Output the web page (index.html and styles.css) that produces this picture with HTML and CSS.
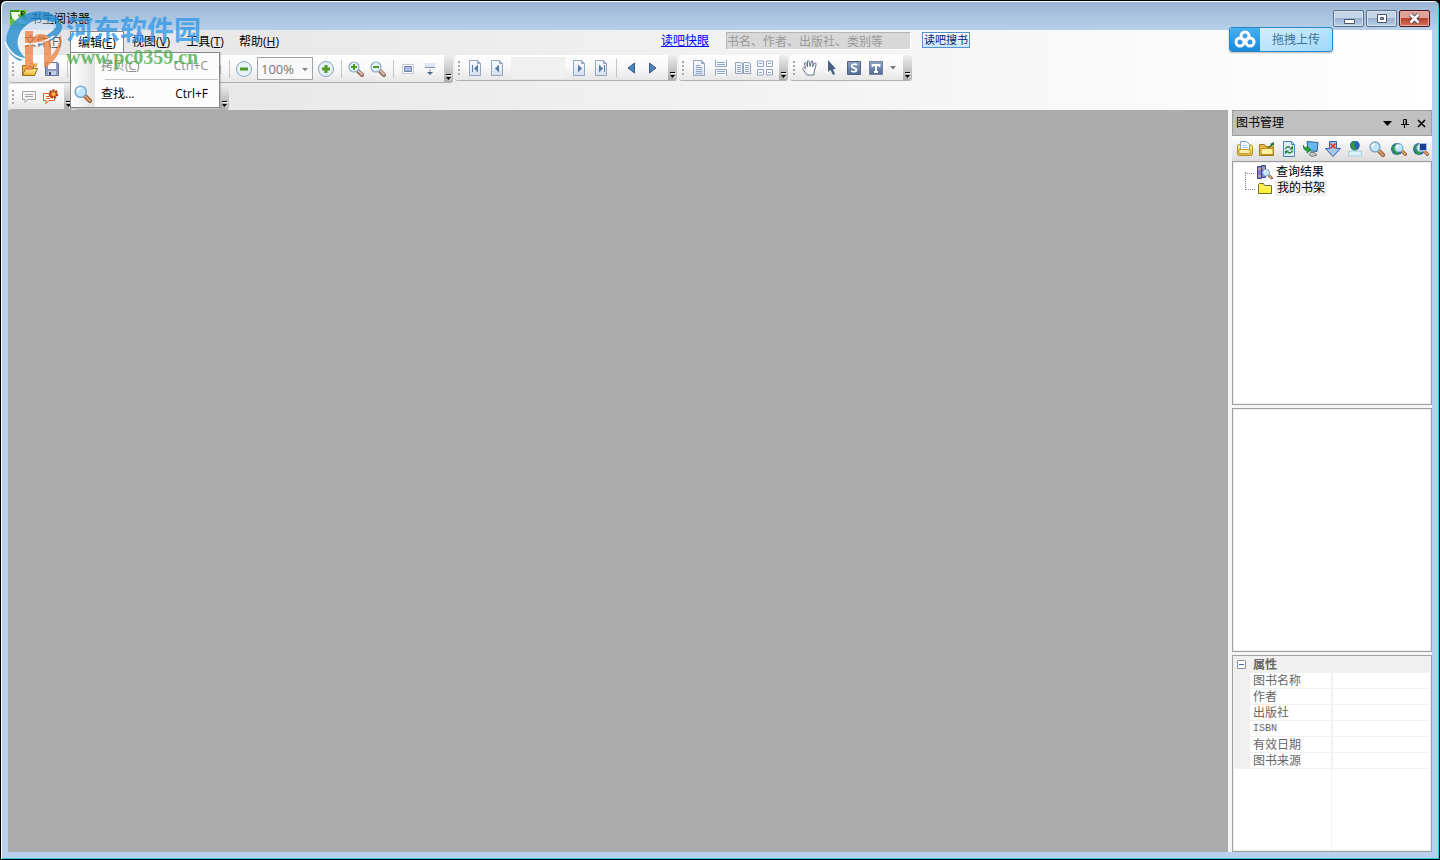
FILE: index.html
```html
<!DOCTYPE html>
<html lang="zh-CN">
<head>
    <meta charset="utf-8">
    <meta name="viewport" content="width=device-width">
    <title>书生阅读器</title>
    <link rel="stylesheet" href="styles.css">
</head>
<body>
<!-- shared icons -->
<svg class="defs" width="0" height="0">
    <defs>
        <linearGradient id="g-page" x1="0" y1="0" x2="0" y2="1"><stop offset="0" stop-color="#fff"/><stop offset="1" stop-color="#d5deee"/></linearGradient>
        <linearGradient id="g-blue" x1="0" y1="0" x2="0" y2="1"><stop offset="0" stop-color="#8fa3c4"/><stop offset="1" stop-color="#536b93"/></linearGradient>
        <linearGradient id="g-gold" x1="0" y1="0" x2="0" y2="1"><stop offset="0" stop-color="#fff0a0"/><stop offset="1" stop-color="#e5b42d"/></linearGradient>
    </defs>
    <symbol id="i-lens" viewBox="0 0 16 16">
        <path d="M9 9l5 5" stroke="#8c6258" stroke-width="4" stroke-linecap="round"/>
        <path d="M10 9.500l4 4" stroke="#dcb9ac" stroke-width="2" stroke-linecap="round"/>
        <circle cx="6" cy="6" r="5" fill="#e3f3fb" stroke="#90a9c4" stroke-width="1.200"/>
    </symbol>
    <symbol id="i-find" viewBox="0 0 16 16">
        <path d="M10 10l4 4" stroke="#8b5a3c" stroke-width="4" stroke-linecap="round"/>
        <path d="M10 10l4 4" stroke="#e89a5e" stroke-width="2" stroke-linecap="round"/>
        <circle cx="6" cy="6" r="5" fill="#bfe6fa" stroke="#7ea4c8" stroke-width="1.300"/>
        <path d="M3 6q0-3 3-3" stroke="#fff" stroke-width="1.500" fill="none"/>
    </symbol>
    <symbol id="i-sheet" viewBox="0 0 16 16">
        <path d="M2.500.500h8l3 3v12h-11z" fill="url(#g-page)" stroke="#91a4c0"/>
        <path d="M10.500.500v3h3z" fill="#b3c2da" stroke="#91a4c0"/>
    </symbol>
    <symbol id="i-globe" viewBox="0 0 16 16">
        <circle cx="6" cy="8" r="6" fill="#2464b8"/>
        <path d="M1 6q4-4 6-3l-2 5 3 4-2 2q-5-2-5-8z" fill="#2f9a3c"/>
    </symbol>
    <symbol id="i-more" viewBox="0 0 7 8">
        <path d="M1 0h5v1H1zM1 3h5L3.500 6z"/>
        <path d="M2 1h5v1H2zM6 4h1L4.500 7H4z" fill="#fff"/>
    </symbol>
</svg>

<div class="window">
    <header class="titlebar">
        <svg class="app-icon" width="16" height="16" viewBox="0 0 16 16">
            <path d="M0 0h16v16H0z" fill="#69bf2c"/><path d="M0 0h9v9H0z" fill="#3c9a1d"/>
            <path d="M1 2h9v2Q5 5 12 9l4 2v3H9L2 8z" fill="#f2fbe5"/><path d="M1 15l7-4 3 4z" fill="#c8ec56"/>
            <path d="M11.500 6V1.500h2q2 1 0 2.500h-2l3 2" fill="none" stroke="#152b10"/>
        </svg>
        <span class="caption">书生阅读器</span>
        <div class="window-buttons">
            <button aria-label="最小化"><svg width="12" height="12"><path d="M1.500 6.500h10v4h-10z" fill="#fff" stroke="#4b5366"/></svg></button>
            <button aria-label="还原"><svg width="12" height="10"><path d="M1.500.500h9v8h-9z" fill="#fff" stroke="#4b5366"/><path d="M4.500 3.500h3v2h-3z" fill="#8ba4c3" stroke="#4b5366"/></svg></button>
            <button class="close" aria-label="关闭"><svg width="13" height="11"><path d="M2.500 1.500l8 8m0-8l-8 8" stroke="#564350" stroke-width="4.500"/><path d="M2.500 1.500l8 8m0-8l-8 8" stroke="#fff" stroke-width="2.600"/></svg></button>
        </div>
    </header>

    <div class="client">
        <div class="menu-row">
            <nav class="menubar">
                <button>文件(<u>F</u>)</button>
                <div class="menu-open">
                    <button>编辑(<u>E</u>)</button>
                    <div class="menu">
                        <button class="disabled" disabled><span class="gutter"></span><span class="label">拷贝(<u>C</u>)</span><span>Ctrl+C</span></button>
                        <div class="menu-line"></div>
                        <button><span class="gutter"><svg width="18" height="18"><use href="#i-find"/></svg></span><span class="label">查找...</span><span>Ctrl+F</span></button>
                    </div>
                </div>
                <button>视图(<u>V</u>)</button>
                <button>工具(<u>T</u>)</button>
                <button>帮助(<u>H</u>)</button>
            </nav>
            <form class="search">
                <a href="#">读吧快眼</a>
                <input type="text" aria-label="搜书" placeholder="书名、作者、出版社、类别等">
                <button type="button">读吧搜书</button>
            </form>
        </div>

        <div class="toolbars">
            <div class="toolbar file-bar">
                <i class="grip"></i>
                <button aria-label="打开"><svg width="18" height="16"><path d="M1.500 14V4.500h4l1 1h6v3" fill="#e8b83e" stroke="#9a6d17"/><path d="M1.500 14.500l3-7h12l-3 7z" fill="url(#g-gold)" stroke="#9a6d17"/><path d="M9 3q3-3 5 0l2-1-1 4-4-1 1.500-1Q11 2.500 9 3z" fill="#f4ac43" stroke="#b27420" stroke-width=".500"/></svg></button>
                <button aria-label="保存"><svg width="16" height="16"><path d="M1.500 1.500h12l1 1v12h-13z" fill="#8c9ac3" stroke="#62719b"/><path d="M4 2h8v6H4z" fill="#f5f7fc"/><path d="M4 10h8v4H4z" fill="#c4cbdd"/><path d="M5 11h2v3H5z" fill="#36456d"/></svg></button>
                <i class="sep"></i>
                <button aria-label="打印"><svg width="16" height="16"><use href="#i-sheet"/></svg></button>
                <button aria-label="拷贝"><svg width="16" height="16"><use href="#i-sheet"/></svg></button>
                <button aria-label="撤销"><svg width="16" height="16"><use href="#i-sheet"/></svg></button>
                <button aria-label="重做"><svg width="16" height="16"><use href="#i-sheet"/></svg></button>
                <button aria-label="左旋"><svg width="16" height="16"><use href="#i-sheet"/></svg></button>
                <button aria-label="右旋"><svg width="16" height="16"><use href="#i-sheet"/></svg></button>
                <button aria-label="全屏"><svg width="16" height="16"><path d="M1 4h14v9H1z" fill="#a3a9bb"/></svg></button>
                <i class="sep"></i>
                <button aria-label="缩小"><svg width="16" height="16"><circle cx="8" cy="8" r="7.500" fill="#e6f1f8" stroke="#8ba4bd"/><path d="M4 6.500h8v3H4z" fill="#4f9a23"/></svg></button>
                <label class="zoom"><select aria-label="缩放"><option>100%</option></select></label>
                <button aria-label="放大"><svg width="16" height="16"><circle cx="8" cy="8" r="7.500" fill="#e6f1f8" stroke="#8ba4bd"/><path d="M6.500 4h3v2.500H12v3H9.500V12h-3V9.500H4v-3h2.500z" fill="#4f9a23"/></svg></button>
                <i class="sep"></i>
                <button aria-label="放大镜"><svg width="16" height="16"><use href="#i-lens"/><path d="M6 3v6M3 6h6" stroke="#4f9a23" stroke-width="2"/></svg></button>
                <button aria-label="缩小镜"><svg width="16" height="16"><use href="#i-lens"/><path d="M3 6h6" stroke="#4f9a23" stroke-width="2"/></svg></button>
                <i class="sep"></i>
                <button aria-label="适合页面"><svg width="14" height="12"><path d="M1.500 1.500h11v9h-11z" fill="#fff" stroke="#8796b3" stroke-dasharray="1 1"/><path d="M3.500 3.500h7v5h-7z" fill="#a9bce0" stroke="#6b80ab"/></svg></button>
                <button aria-label="适合宽度"><svg width="12" height="14"><path d="M1 1h10v4H1z" fill="#dfe5f1"/><path d="M1 5.500h10M6 7v5" stroke="#8595b1"/><path d="M3 10h6l-3 3z" fill="#4d6a93"/></svg></button>
                <button class="more" aria-label="更多"><svg width="7" height="8"><use href="#i-more"/></svg></button>
            </div>
            <div class="toolbar page-bar">
                <i class="grip"></i>
                <button aria-label="首页"><svg width="16" height="16"><use href="#i-sheet"/><path d="M5.500 5v7" stroke="#5b7ba8"/><path d="M11 4.500v8l-4-4z" fill="#5b7ba8"/></svg></button>
                <button aria-label="上一页"><svg width="16" height="16"><use href="#i-sheet"/><path d="M10 4.500v8l-4-4z" fill="#5b7ba8"/></svg></button>
                <input class="page-no" type="text" aria-label="页码">
                <button aria-label="下一页"><svg width="16" height="16"><use href="#i-sheet"/><path d="M7 4.500v8l4-4z" fill="#5b7ba8"/></svg></button>
                <button aria-label="末页"><svg width="16" height="16"><use href="#i-sheet"/><path d="M11.500 5v7" stroke="#5b7ba8"/><path d="M6 4.500v8l4-4z" fill="#5b7ba8"/></svg></button>
                <i class="sep"></i>
                <button aria-label="后退"><svg width="8" height="12"><path d="M7.500 1v10L1 6z" fill="#4c86b8" stroke="#38598f"/></svg></button>
                <button aria-label="前进"><svg width="8" height="12"><path d="M.500 1v10L7 6z" fill="#4c86b8" stroke="#38598f"/></svg></button>
                <button class="more" aria-label="更多"><svg width="7" height="8"><use href="#i-more"/></svg></button>
            </div>
            <div class="toolbar view-bar">
                <i class="grip"></i>
                <button aria-label="单页"><svg width="16" height="16"><use href="#i-sheet"/><path d="M5 5.500h4M5 7.500h6M5 9.500h6M5 11.500h6M5 13.500h6" stroke="#91a4c0"/></svg></button>
                <button aria-label="连续"><svg width="16" height="16" fill="#f7f9fc" stroke="#91a4c0"><path d="M2.500 0v6.500h11V0M2.500 16V9.500h11V16M4 2.500h8M4 4.500h8M4 11.500h8M4 13.500h8"/></svg></button>
                <button aria-label="对开"><svg width="16" height="16" fill="#f0f4fa" stroke="#91a4c0"><path d="M.500 2.500h5l2 1v10h-7zM8.500 2.500h5l2 1v10h-7zM2 5.500h4M2 7.500h4M2 9.500h4M2 11.500h4M10 5.500h4M10 7.500h4M10 9.500h4M10 11.500h4"/></svg></button>
                <button aria-label="连续对开"><svg width="16" height="16" fill="#f7f9fc" stroke="#91a4c0"><path d="M.500 1v5.500h6V1zM9.500 1v5.500h6V1zM.500 15V9.500h6V15zM9.500 15V9.500h6V15zM2 3.500h3M11 3.500h3M2 12.500h3M11 12.500h3"/></svg></button>
                <button class="more" aria-label="更多"><svg width="7" height="8"><use href="#i-more"/></svg></button>
            </div>
            <div class="toolbar tool-bar">
                <i class="grip"></i>
                <button aria-label="手形"><svg width="18" height="18"><path d="M6 16L1.500 9.500Q2 7.500 4.500 9.500L3.500 4Q5 2 6.500 8L6.500 2Q8-.500 9 7.500L10.500 2Q12.500 1 11.500 8l2-4q2.500-.500 1 4L13 13v3z" fill="#fff" stroke="#62738e"/></svg></button>
                <button aria-label="选择"><svg width="10" height="16"><path d="M1 0l8 9H6l2 5-2 1-2.500-5L1 12z" fill="#4b6183"/></svg></button>
                <button aria-label="选择文字"><svg width="14" height="14"><path d="M.500.500h13v13H.500z" fill="url(#g-blue)" stroke="#506486"/><path d="M10 4Q8 2.500 6 3.500T5 6l4 2q1 2-1 2.500T4 10" fill="none" stroke="#fff" stroke-width="1.800"/></svg></button>
                <button aria-label="文本"><svg width="14" height="14"><path d="M.500.500h13v13H.500z" fill="url(#g-blue)" stroke="#7283a0"/><path d="M3.500 6V4h7v2M7 4v7M5 11h4" fill="none" stroke="#fff" stroke-width="1.800"/></svg></button>
                <button class="caret" aria-label="文本选项"><svg width="6" height="4"><path d="M0 0h6L3 3.500z" fill="#777"/></svg></button>
                <button class="more" aria-label="更多"><svg width="7" height="8"><use href="#i-more"/></svg></button>
            </div>
        </div>
        <div class="toolbars">
            <div class="toolbar note-bar">
                <i class="grip"></i>
                <button aria-label="批注"><svg width="16" height="14"><path d="M1.500 1.500h13v8H7l-3 3v-3H1.500zM4 4.500h8M4 6.500h8" fill="none" stroke="#a4a4a4"/></svg></button>
                <button aria-label="批注设置"><svg width="18" height="16"><path d="M1.500 4.500h11v7H7l-3 3v-3H1.500zM4 7.500h6M4 9.500h4" fill="#fff" stroke="#e55a1c"/><circle cx="11.500" cy="5" r="3.500" fill="#f47b20" stroke="#a63c11" stroke-width="2.500" stroke-dasharray="2 1"/><circle cx="11.500" cy="5" r="1.500" fill="#ffc567"/></svg></button>
                <button class="more" aria-label="更多"><svg width="7" height="8"><use href="#i-more"/></svg></button>
            </div>
            <div class="toolbar mark-bar">
                <i class="grip"></i>
                <button class="more" aria-label="更多"><svg width="7" height="8"><use href="#i-more"/></svg></button>
            </div>
        </div>

        <div class="workspace">
            <main class="document"></main>
            <aside class="side">
                <section class="books">
                    <div class="side-head">
                        <h2>图书管理</h2>
                        <button aria-label="菜单"><svg width="9" height="5"><path d="M0 0h9L4.500 5z"/></svg></button>
                        <button aria-label="固定"><svg width="8" height="9"><path d="M2.500 5.500v-5h3v5M5 1v4M0 5.500h8M3.500 5v4" fill="none" stroke="#000"/></svg></button>
                        <button aria-label="关闭面板"><svg width="9" height="9"><path d="M1 1l7 7M8 1L1 8" stroke="#000" stroke-width="1.600"/></svg></button>
                    </div>
                    <div class="side-tools">
                        <button aria-label="新建"><svg width="18" height="16"><path d="M1.500 5q0-1.500 2-1.500h10q3 0 3 3v6q0 2-2 2h-11q-2 0-2-2z" fill="url(#g-gold)" stroke="#b08e26"/><path d="M4.500 9.500v-9h6l3 3v6z" fill="#fff" stroke="#7ba0cc"/><path d="M6 4.500h5M6 6.500h6" stroke="#a9c5e6"/><path d="M3 8.500h11v4H3z" fill="#f8eda8" stroke="#c09c32"/></svg></button>
                        <button aria-label="打开目录"><svg width="18" height="16"><path d="M1.500 3.500h5l1 2h8v9h-14z" fill="#e9b941" stroke="#a57c19"/><path d="M3 7.500h12v6H3z" fill="#fff1a1" stroke="#b98c20"/><path d="M9 7l4-3-1-1 4-2v4l-1-1-4 3z" fill="#276f38"/></svg></button>
                        <button aria-label="刷新"><svg width="16" height="16"><path d="M2.500.500h8l3 3v12h-11z" fill="#deedfb" stroke="#4d7fb8"/><path d="M10.500.500v3h3" fill="none" stroke="#4d7fb8"/><path d="M4.500 8Q6 4.500 9 6.500M11.500 9.500Q10 13 6.500 11" fill="none" stroke="#198335" stroke-width="1.500"/><path d="M8 8.500h4v-4zM8 9.500H4v4z" fill="#198335"/></svg></button>
                        <button aria-label="导入"><svg width="16" height="16"><path d="M4 .500l11 1-1 9-9-1z" fill="#65b7ef" stroke="#375d88"/><path d="M8 11l4 1 2 2-5 1.500-3-2z" fill="#c8ccd0" stroke="#777"/><path d="M0 4q1 3 4 3V5l4 4-4 3v-2Q0 9 0 4z" fill="#22a842" stroke="#126327" stroke-width=".600"/></svg></button>
                        <button aria-label="移除"><svg width="16" height="16"><path d="M4.500.500h7v7h4L8 15.500.500 7.500h4z" fill="#a4c8f2" stroke="#315eaa"/><path d="M5.500 2.500l5 5m0-5l-5 5" stroke="#e13620" stroke-width="1.700"/></svg></button>
                        <button aria-label="网络"><svg width="14" height="16"><path d="M1 10h12l1 5H0z" fill="#dbf1fc" stroke="#a1cce2"/><use href="#i-globe" x="2" y="-2" width="13" height="13"/></svg></button>
                        <button aria-label="搜索"><svg width="16" height="16"><use href="#i-find"/></svg></button>
                        <button aria-label="网络搜索"><svg width="16" height="16"><use href="#i-globe"/><use href="#i-find" x="3" y="1" width="13" height="15"/></svg></button>
                        <button aria-label="高级搜索"><svg width="16" height="16"><use href="#i-globe"/><use href="#i-find" x="3" y="1" width="13" height="15"/><path d="M6.500 2.500h7v7h-7z" fill="#163f91" stroke="#a8c4e8"/></svg></button>
                    </div>
                    <ul class="tree">
                        <li><svg width="18" height="16"><path d="M2.500 2.500h4v12h-4z" fill="#8877d2" stroke="#4c3f8c"/><path d="M6.500 1.500h4v12h-4z" fill="#6f7fc8" stroke="#3e4c87"/><path d="M3 5h3M7 4h3M3 12h3" stroke="#f0cb51"/><use href="#i-find" x="7" y="4" width="11" height="12"/></svg><a href="#">查询结果</a></li>
                        <li><svg width="18" height="16"><path d="M2.500 13.500v-9l1-1h4l1 2h7v8z" fill="#ffee3d" stroke="#70701f"/><path d="M4 7h11" stroke="#fff" stroke-dasharray="1 1"/></svg><a class="selected" href="#">我的书架</a></li>
                    </ul>
                </section>
                <section class="detail"></section>
                <section class="props">
                    <table>
                        <colgroup><col class="col-fold"><col class="col-name"><col></colgroup>
                        <thead><tr><th class="fold"><button aria-label="折叠"></button></th><th colspan="2">属性</th></tr></thead>
                        <tbody>
                            <tr><td></td><td>图书名称</td><td></td></tr>
                            <tr><td></td><td>作者</td><td></td></tr>
                            <tr><td></td><td>出版社</td><td></td></tr>
                            <tr><td></td><td class="latin">ISBN</td><td></td></tr>
                            <tr><td></td><td>有效日期</td><td></td></tr>
                            <tr><td></td><td>图书来源</td><td></td></tr>
                        </tbody>
                    </table>
                </section>
            </aside>
        </div>
    </div>
</div>

<button class="upload">
    <svg width="30" height="24"><g fill="none" stroke="#fff" stroke-width="3"><circle cx="15" cy="8" r="4"/><circle cx="10" cy="14" r="4"/><circle cx="20" cy="14" r="4"/></g></svg>
    <span>拖拽上传</span>
</button>

<div class="watermark">
    <svg width="60" height="62" viewBox="0 0 60 62">
        <circle cx="30" cy="31" r="24" fill="#fff" opacity=".5"/>
        <!-- blue crescent and its tail -->
        <path d="M16 52C-4 44-2 14 22 5 38-1 50 4 56 12l-8 1C38 8 24 11 17 22 11 32 13 42 22 49z" fill="#268ed1"/>
        <path d="M52 12q10 2 4 12-7 9-21 13l-2-6q13-5 19-13z" fill="#268ed1"/>
        <!-- orange arch -->
        <path d="M57 24q3 24-17 35V39q0-5-5-5-4 0-6 3v24h-8V22h8v7q3-4 8-4 10 0 10 12v10q8-8 10-23z" fill="#ee8848"/>
        <path d="M1 33q6 15 20 17M50 27Q38 36 20 35" fill="none" stroke="#fff" stroke-width="2"/>
    </svg>
    <div class="watermark-text"><strong>河东软件园</strong><b>www.pc0359.cn</b></div>
</div>
</body>
</html>
```
FILE: styles.css
```css
:root {
    --line: #a0a0a0;
    --face: #f0f0f0;
    --frame: #b9d1ea;
    --sans: "Open Sans", "Noto Sans CJK SC", sans-serif;
}

* {
    box-sizing: border-box;
}

body {
    margin: 0;
    font: 12px/16px var(--sans);
    color: #000;
    background: #000;
    overflow: hidden;
}

button, input, select {
    margin: 0;
    padding: 0;
    border: 0;
    font: inherit;
    color: inherit;
    background: none;
}

.defs {
    position: absolute;
}

svg {
    display: block;
    flex: none;
}

.window {
    display: flex;
    flex-direction: column;
    height: 100vh;
    padding: 0 7px 7px;
    border: 1px solid #000;
    border-radius: 6px 6px 0 0;
    background: linear-gradient(#99b4d1, var(--frame) 30px);
    box-shadow: inset 1px 1px #fff, inset -1px -1px #27cbe8;
}

/* title bar */
.titlebar {
    display: flex;
    flex: none;
    height: 29px;
    padding: 9px 2px 0;
    gap: 4px;
}

.caption {
    line-height: 18px;
}

.window-buttons {
    display: flex;
    gap: 2px;
    margin-left: auto;
}

.window-buttons button {
    display: flex;
    align-items: center;
    justify-content: center;
    width: 31px;
    height: 17px;
    border: 1px solid #5c6f8c;
    border-radius: 2px;
    background: linear-gradient(#c4d5e8 50%, #98b2d0 50%, #b9cfe6);
    box-shadow: inset 0 0 0 1px #d6e4f2;
}

.window-buttons .close {
    border-color: #4b1824;
    background: linear-gradient(#dfa197 50%, #bb4030 50%, #d3705b);
    box-shadow: inset 0 0 0 1px #e5aaa0;
}

.client {
    display: flex;
    flex: 1;
    flex-direction: column;
    min-height: 0;
    background: linear-gradient(90deg, #e4e4e4, #fff);
}

/* menu bar */
.menu-row {
    display: flex;
    flex: none;
    height: 25px;
}

.menubar {
    display: flex;
    width: 653px;
    padding: 1px 0 0 8px;
}

.menubar > button, .menu-open > button {
    width: 54px;
    height: 22px;
    text-align: center;
    white-space: nowrap;
}

.menu-open {
    position: relative;
    z-index: 5;
}

.menu-open > button {
    background: #fff;
    border: 1px solid #868686;
    border-bottom: 0;
}

.menu {
    position: absolute;
    top: 21px;
    left: 0;
    width: 150px;
    border: 1px solid #868686;
    background: #fcfcfc linear-gradient(90deg, #fff, #e2e2e2) no-repeat 0 0 / 24px 100%;
    box-shadow: 1px 1px 1px #9996;
}

.menu button {
    display: flex;
    align-items: center;
    width: 100%;
    height: 26px;
    padding-right: 11px;
}

.menu .disabled {
    color: #8d8d8d;
}

.gutter {
    width: 30px;
    padding-left: 3px;
}

.menu .label {
    margin-right: auto;
}

.menu-line {
    height: 1px;
    margin: 0 1px 1px 34px;
    background: #c5c5c5;
}

.search {
    display: flex;
    align-items: flex-start;
    padding-top: 2px;
}

.search a {
    color: #00f;
    line-height: 18px;
    margin-right: 17px;
}

.search input {
    width: 185px;
    height: 18px;
    margin-right: 11px;
    border: 1px solid #fff;
    border-top-color: #b5b5b5;
    border-left-color: #b5b5b5;
    background: #d8d8d8;
}

.search input::placeholder {
    color: #999;
    opacity: 1;
}

.search button {
    width: 48px;
    height: 16px;
    border: 1px solid #5794cb;
    background: linear-gradient(#fff, #c6e8fa);
    color: #002070;
    font-size: 11px;
    line-height: 14px;
    white-space: nowrap;
}

/* toolbars */
.toolbars {
    display: flex;
    flex: none;
    align-items: flex-start;
    gap: 2px;
    height: 29px;
    padding-left: 1px;
}

.toolbars + .toolbars {
    height: 26px;
}

.toolbar {
    display: flex;
    flex: none;
    align-items: center;
    height: 26px;
    border-bottom: 1px solid #b0b0b0;
    border-radius: 3px;
    background: linear-gradient(#fff, #f8f8f8 50%, #e6e6e6);
}

.file-bar {
    width: 444px;
    height: 28px;
}

.page-bar {
    width: 222px;
}

.view-bar {
    width: 109px;
}

.tool-bar {
    width: 122px;
}

.note-bar {
    width: 64px;
}

.mark-bar {
    width: 154px;
}

.toolbar button {
    display: flex;
    flex: none;
    align-items: center;
    justify-content: center;
    width: 22px;
    height: 24px;
}

.grip {
    flex: none;
    width: 9px;
    height: 14px;
    background: repeating-linear-gradient(#aaa 0 2px, transparent 2px 4px) no-repeat 3px 0 / 2px 100%;
}

.file-bar .grip {
    width: 10px;
}

.sep {
    flex: none;
    width: 8px;
    height: 18px;
    background: linear-gradient(#c4c4c4, #c4c4c4) no-repeat center / 1px 100%;
}

.toolbar .more {
    align-items: flex-end;
    align-self: stretch;
    width: 9px;
    height: auto;
    margin-left: auto;
    border-radius: 0 3px 3px 0;
    background: linear-gradient(#eee, #aaa);
}

.toolbar .caret {
    width: 12px;
}

.zoom {
    position: relative;
    flex: none;
    margin: 0 2px;
}

.zoom::after {
    content: "";
    position: absolute;
    top: 11px;
    right: 5px;
    border: 3px solid transparent;
    border-top-color: #808080;
}

.zoom select {
    display: block;
    width: 56px;
    height: 23px;
    padding-left: 3px;
    border: 1px solid #a3a3a3;
    background: #f8f8f8;
    color: #777;
    font-size: 13px;
    appearance: none;
}

.page-no {
    width: 54px;
    height: 22px;
    margin: 0 3px;
    background: var(--face);
}

/* document and side panel */
.workspace {
    display: flex;
    flex: 1;
    min-height: 0;
}

.document {
    flex: 1;
    background: #ababab;
}

.side {
    display: flex;
    flex: none;
    flex-direction: column;
    gap: 3px;
    width: 204px;
    padding-left: 4px;
    background: #f5f5f5;
}

.books {
    display: flex;
    flex: 295 1 295px;
    flex-direction: column;
}

.side-head {
    display: flex;
    align-items: center;
    height: 26px;
    padding: 0 1px 0 3px;
    border: 1px solid var(--line);
    background: #c0c0c0;
}

.side-head h2 {
    margin: 0 auto 0 0;
    font: inherit;
}

.side-head button {
    display: flex;
    align-items: center;
    justify-content: center;
    width: 17px;
    height: 16px;
}

.side-tools {
    display: flex;
    height: 25px;
    padding: 0 0 0 2px;
    background: linear-gradient(#fff, #dcdcdc);
}

.side-tools button {
    display: flex;
    align-items: center;
    justify-content: center;
    width: 22px;
}

.tree, .detail, .props {
    margin: 0;
    border: 1px solid var(--line);
    background: #fff;
    box-shadow: inset 0 0 0 1px #eee;
}

.tree {
    flex: 1;
    padding: 2px 0 0 12px;
    list-style: none;
}

.tree li {
    display: flex;
    height: 16px;
    gap: 1px;
}

.tree li::before {
    content: "";
    width: 9px;
    height: 9px;
    border-bottom: 1px dotted #888;
}

.tree li + li::before {
    height: 17px;
    margin-top: -8px;
    border-left: 1px dotted #888;
}

.tree a {
    padding: 0 2px;
    color: inherit;
    text-decoration: none;
}

.tree .selected {
    background: var(--face);
}

.detail {
    flex: 244 1 244px;
}

.props {
    flex: 197 1 197px;
    padding: 1px;
    background: linear-gradient(var(--face), var(--face)) no-repeat 98px 0 / 1px 100%, #fff;
}

.props table {
    width: 100%;
    border-collapse: separate;
    border-spacing: 0;
    table-layout: fixed;
    color: #666;
}

.col-fold {
    width: 16px;
}

.col-name {
    width: 83px;
}

.props th, .props td {
    height: 16px;
    padding: 0 0 0 3px;
    line-height: 15px;
    text-align: left;
    vertical-align: top;
}

.props th {
    background: var(--face);
}

.props td {
    border-bottom: 1px solid var(--face);
}

.props td:nth-child(2) {
    border-right: 1px solid var(--face);
}

.props .fold {
    padding: 3px 0 0 3px;
}

.props td:first-child {
    background: var(--face);
}

.props .latin {
    font: 10px/15px "Liberation Mono", monospace;
}

.fold button {
    display: block;
    width: 9px;
    height: 9px;
    border: 1px solid #919191;
    border-radius: 1px;
    background: linear-gradient(#3b62b5, #3b62b5) no-repeat center / 5px 1px, #fff;
}

/* floating upload button over the frame */
.upload {
    position: absolute;
    top: 27px;
    right: 107px;
    display: flex;
    align-items: center;
    width: 104px;
    height: 25px;
    border: 1px solid #2587c8;
    border-radius: 3px;
    background: linear-gradient(160deg, #e2f4fe, #9ed8f8);
    color: #3b719d;
    box-shadow: 0 1px 2px #0004;
    overflow: hidden;
}

.upload svg {
    background: linear-gradient(#45aff0, #1789db);
}

.upload span {
    flex: 1;
    line-height: 18px;
}

.watermark {
    position: absolute;
    z-index: 10;
    top: 9px;
    left: 4px;
    display: flex;
    gap: 2px;
    opacity: .8;
    pointer-events: none;
}

.watermark-text {
    display: flex;
    flex-direction: column;
}

.watermark strong {
    font: bold 27px/39px "Noto Sans CJK SC", sans-serif;
    color: #3399e6;
}

.watermark b {
    font: bold 20px/18px "Liberation Serif", serif;
    color: #4caf50;
}
```
